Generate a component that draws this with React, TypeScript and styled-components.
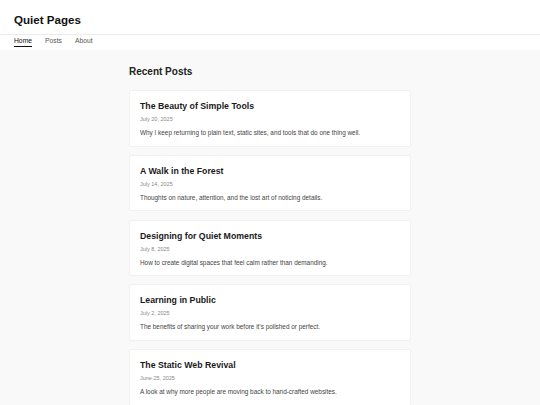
import React from "react";
import styled, { createGlobalStyle } from "styled-components";

const Global = createGlobalStyle`
  html, body { margin: 0; padding: 0; }
  body {
    background: #f9f9f9;
    font-family: "Liberation Sans", Arial, sans-serif;
    color: #222;
  }
`;

const Header = styled.header`
  background: #fff;
`;

const TitleBar = styled.div`
  height: 35px;
  display: flex;
  align-items: center;
  padding: 0 14px;
  border-bottom: 1px solid #ececec;
  box-sizing: border-box;
`;

const SiteTitle = styled.h1`
  margin: 0;
  font-size: 11.6px;
  font-weight: 700;
  color: #111;
  padding-top: 4px;
`;

const Nav = styled.nav`
  height: 15px;
  display: flex;
  gap: 13px;
  padding: 1px 14px 0;
  box-sizing: border-box;
  align-items: flex-start;
`;

const NavLink = styled.a<{ $active?: boolean }>`
  font-size: 6.75px;
  line-height: 10px;
  color: ${(p) => (p.$active ? "#111" : "#555")};
  text-decoration: none;
  border-bottom: ${(p) => (p.$active ? "1px solid #111" : "1px solid transparent")};
  height: 10px;
`;

const Main = styled.main`
  max-width: 282px;
  margin: 0 auto;
  padding-top: 15px;
`;

const Heading = styled.h2`
  margin: 0 0 12px;
  font-size: 10px;
  line-height: 13px;
  font-weight: 700;
  color: #222;
`;

const List = styled.div`
  display: flex;
  flex-direction: column;
  gap: 8.3px;
`;

const Card = styled.article`
  background: #fff;
  border: 1px solid #f1f1f1;
  border-radius: 2px;
  padding: 10px 10px 9px;
  height: 56.5px;
  box-sizing: border-box;
`;

const CardTitle = styled.h3`
  margin: 0;
  font-size: 8.75px;
  line-height: 11px;
  font-weight: 700;
  color: #1a1a1a;
`;

const CardDate = styled.div`
  margin-top: 4px;
  font-size: 5.5px;
  line-height: 7px;
  color: #888;
`;

const CardDesc = styled.p`
  margin: 6px 0 0;
  font-size: 6.4px;
  line-height: 8px;
  color: #444;
`;

const posts = [
  { title: "The Beauty of Simple Tools", date: "July 20, 2025", desc: "Why I keep returning to plain text, static sites, and tools that do one thing well." },
  { title: "A Walk in the Forest", date: "July 14, 2025", desc: "Thoughts on nature, attention, and the lost art of noticing details." },
  { title: "Designing for Quiet Moments", date: "July 8, 2025", desc: "How to create digital spaces that feel calm rather than demanding." },
  { title: "Learning in Public", date: "July 2, 2025", desc: "The benefits of sharing your work before it\u2019s polished or perfect." },
  { title: "The Static Web Revival", date: "June 25, 2025", desc: "A look at why more people are moving back to hand-crafted websites." },
];

export default function App() {
  return (
    <>
      <Global />
      <Header>
        <TitleBar>
          <SiteTitle>Quiet Pages</SiteTitle>
        </TitleBar>
        <Nav>
          <NavLink $active href="#">Home</NavLink>
          <NavLink href="#">Posts</NavLink>
          <NavLink href="#">About</NavLink>
        </Nav>
      </Header>
      <Main>
        <Heading>Recent Posts</Heading>
        <List>
          {posts.map((p) => (
            <Card key={p.title}>
              <CardTitle>{p.title}</CardTitle>
              <CardDate>{p.date}</CardDate>
              <CardDesc>{p.desc}</CardDesc>
            </Card>
          ))}
        </List>
      </Main>
    </>
  );
}
